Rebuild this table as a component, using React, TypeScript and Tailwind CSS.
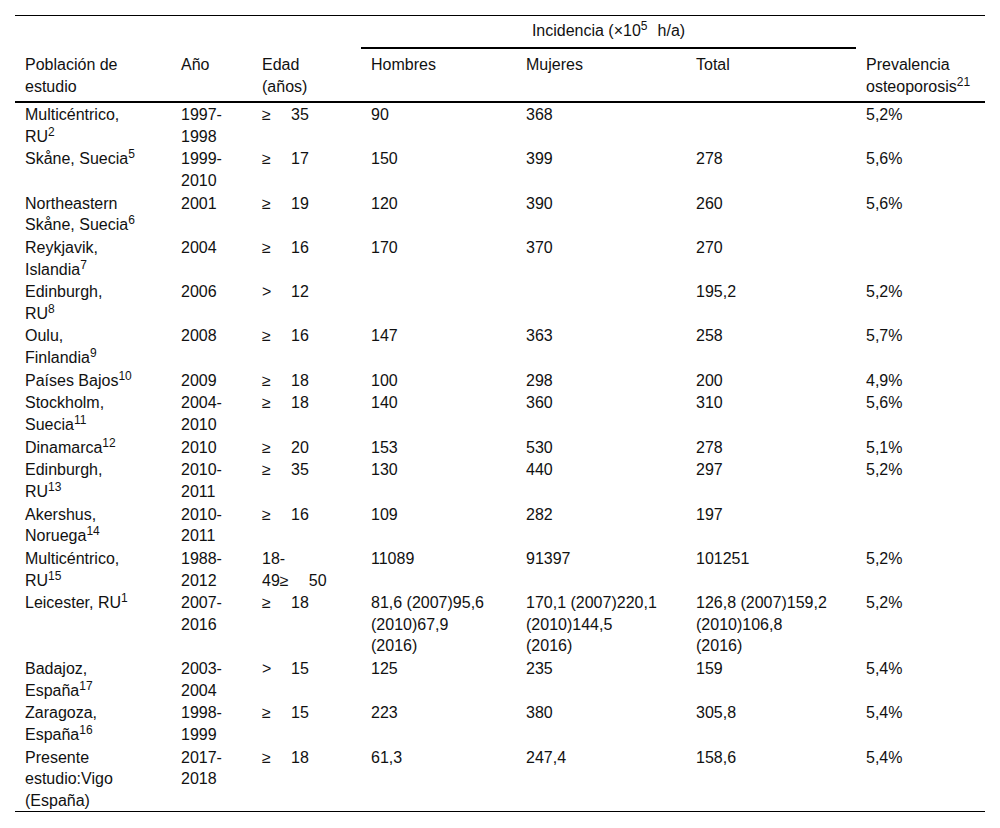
import React from "react";

type Cell = React.ReactNode;

const Ge = ({ n, sym = "≥" }: { n: string; sym?: string }) => (
  <span>
    <span className="inline-block w-[29px]">{sym}</span>
    {n}
  </span>
);

const S = ({ c }: { c: string }) => <sup>{c}</sup>;

const rows: Cell[][] = [
  [<>Multicéntrico,<br />RU<S c="2" /></>, <>1997-<br />1998</>, <Ge n="35" />, "90", "368", "", "5,2%"],
  [<>Skåne, Suecia<S c="5" /></>, <>1999-<br />2010</>, <Ge n="17" />, "150", "399", "278", "5,6%"],
  [<>Northeastern<br />Skåne, Suecia<S c="6" /></>, "2001", <Ge n="19" />, "120", "390", "260", "5,6%"],
  [<>Reykjavik,<br />Islandia<S c="7" /></>, "2004", <Ge n="16" />, "170", "370", "270", ""],
  [<>Edinburgh,<br />RU<S c="8" /></>, "2006", <Ge n="12" sym=">" />, "", "", "195,2", "5,2%"],
  [<>Oulu,<br />Finlandia<S c="9" /></>, "2008", <Ge n="16" />, "147", "363", "258", "5,7%"],
  [<>Países Bajos<S c="10" /></>, "2009", <Ge n="18" />, "100", "298", "200", "4,9%"],
  [<>Stockholm,<br />Suecia<S c="11" /></>, <>2004-<br />2010</>, <Ge n="18" />, "140", "360", "310", "5,6%"],
  [<>Dinamarca<S c="12" /></>, "2010", <Ge n="20" />, "153", "530", "278", "5,1%"],
  [<>Edinburgh,<br />RU<S c="13" /></>, <>2010-<br />2011</>, <Ge n="35" />, "130", "440", "297", "5,2%"],
  [<>Akershus,<br />Noruega<S c="14" /></>, <>2010-<br />2011</>, <Ge n="16" />, "109", "282", "197", ""],
  [
    <>Multicéntrico,<br />RU<S c="15" /></>,
    <>1988-<br />2012</>,
    <>18-<br />49<span className="inline-block w-[29px]">≥</span>50</>,
    "11089",
    "91397",
    "101251",
    "5,2%",
  ],
  [
    <>Leicester, RU<S c="1" /></>,
    <>2007-<br />2016</>,
    <Ge n="18" />,
    <>81,6 (2007)95,6<br />(2010)67,9<br />(2016)</>,
    <>170,1 (2007)220,1<br />(2010)144,5<br />(2016)</>,
    <>126,8 (2007)159,2<br />(2010)106,8<br />(2016)</>,
    "5,2%",
  ],
  [<>Badajoz,<br />España<S c="17" /></>, <>2003-<br />2004</>, <Ge n="15" sym=">" />, "125", "235", "159", "5,4%"],
  [<>Zaragoza,<br />España<S c="16" /></>, <>1998-<br />1999</>, <Ge n="15" />, "223", "380", "305,8", "5,4%"],
  [<>Presente<br />estudio:Vigo<br />(España)</>, <>2017-<br />2018</>, <Ge n="18" />, "61,3", "247,4", "158,6", "5,4%"],
];

const headers: Cell[] = [
  <>Población de<br />estudio</>,
  "Año",
  <>Edad<br />(años)</>,
  "Hombres",
  "Mujeres",
  "Total",
  <>Prevalencia<br />osteoporosis<S c="21" /></>,
];

const GRID = "grid grid-cols-[156px_81px_109px_155px_170px_170px_129px]";

export default function App() {
  return (
    <div className="w-[1000px] h-[828px] bg-white pt-[15px] px-[15px] font-['Liberation_Sans',Arial,sans-serif] text-[16px] leading-[21.6px] text-[#111]">
      <div className="border-t border-black">
        <div className={GRID}>
          <div />
          <div />
          <div />
          <div className="col-span-3 h-[33px] border-b-2 border-black flex items-center justify-center pb-[1px]">
            <span>
              Incidencia (×10<S c="5" />
              <span className="ml-[10px]">h/a)</span>
            </span>
          </div>
          <div />
        </div>
        <div className={`${GRID} border-b-2 border-black`}>
          {headers.map((h, i) => (
            <div key={i} className="pl-[10px] pt-[5px] pb-[3.8px] whitespace-nowrap">
              {h}
            </div>
          ))}
        </div>
        {rows.map((r, ri) => (
          <div key={ri} className={`${GRID} pt-[1.1px]`}>
            {r.map((c, ci) => (
              <div key={ci} className="pl-[10px] whitespace-nowrap">
                {c}
              </div>
            ))}
          </div>
        ))}
        <div className="border-t border-black" />
      </div>
    </div>
  );
}
